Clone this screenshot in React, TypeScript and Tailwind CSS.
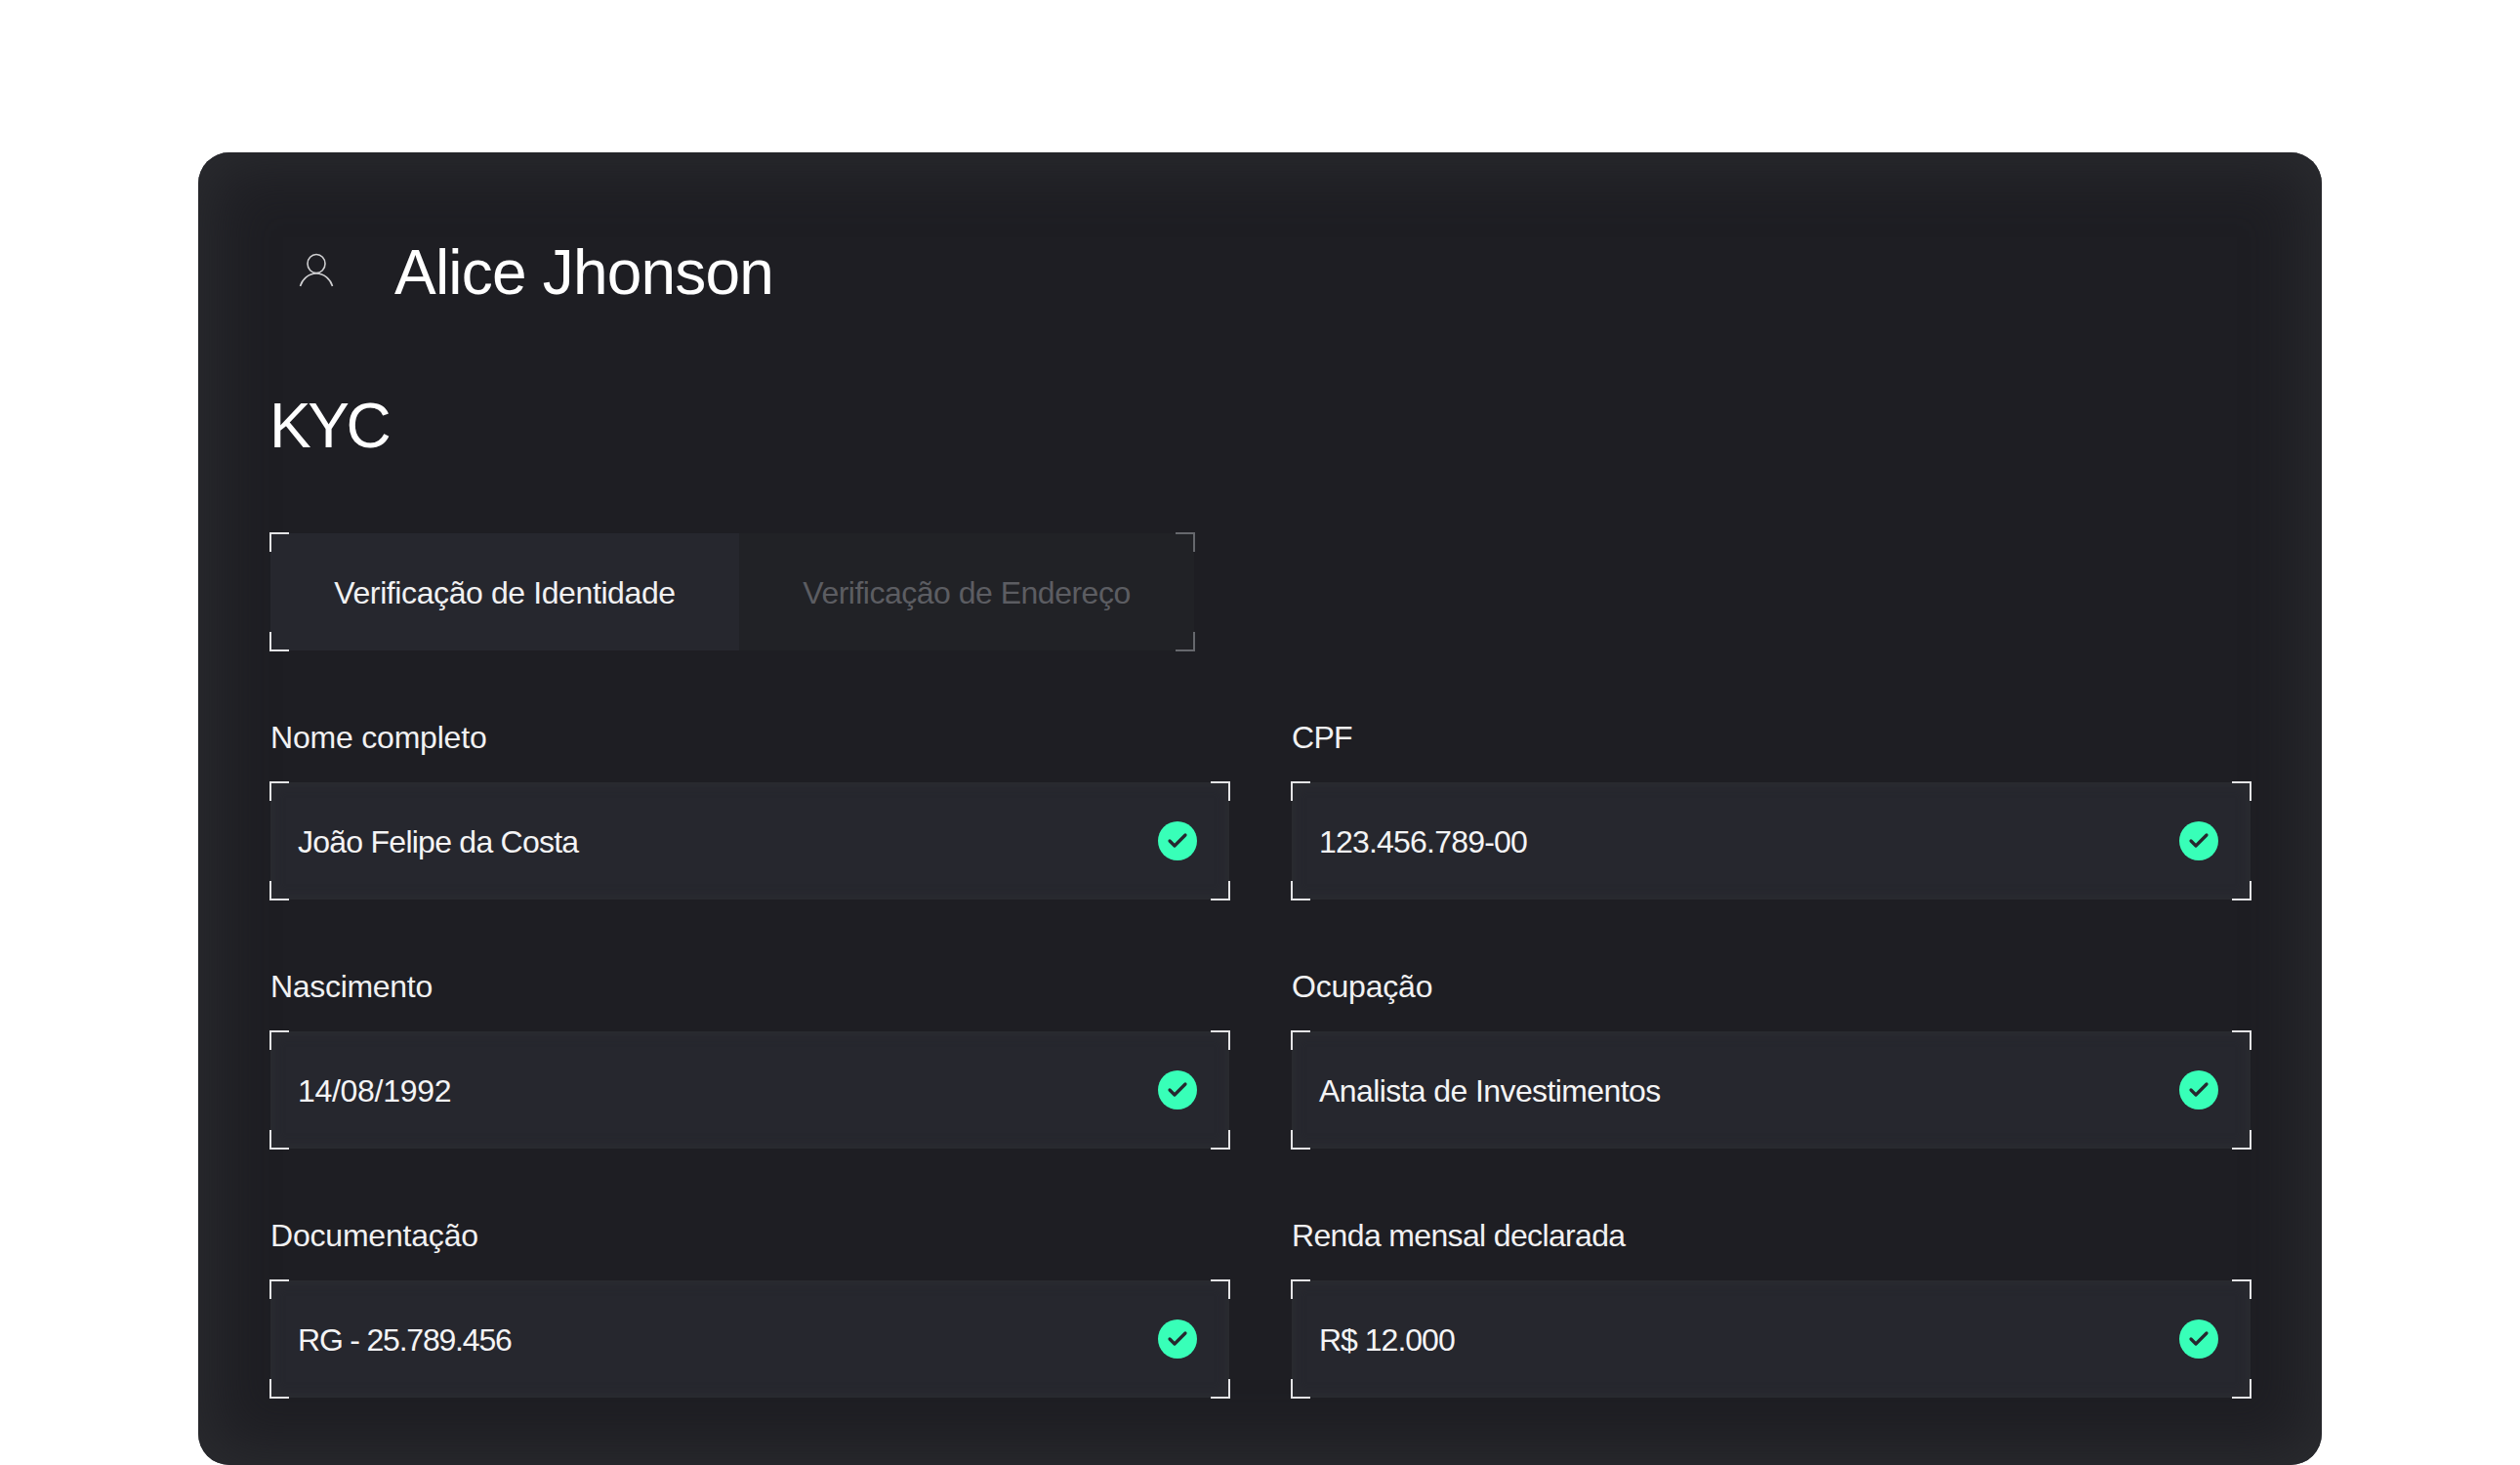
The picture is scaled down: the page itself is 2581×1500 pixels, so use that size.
import React from "react";
import { Check } from "lucide-react";

const fields = [
  { label: "Nome completo", value: "João Felipe da Costa", labelTrack: "tracking-[-0.2px]", track: "tracking-[-0.75px]" },
  { label: "CPF", value: "123.456.789-00", labelTrack: "tracking-[-0.7px]", track: "tracking-[-0.8px]" },
  { label: "Nascimento", value: "14/08/1992", labelTrack: "tracking-[-0.3px]", track: "tracking-[-0.3px]" },
  { label: "Ocupação", value: "Analista de Investimentos", labelTrack: "tracking-[-0.2px]", track: "tracking-[-0.6px]" },
  { label: "Documentação", value: "RG - 25.789.456", labelTrack: "tracking-[-0.2px]", track: "tracking-[-1.2px]" },
  { label: "Renda mensal declarada", value: "R$ 12.000", labelTrack: "tracking-[-0.65px]", track: "tracking-[-1px]" },
];

const Corners = () => (
  <>
    <span className="absolute -left-px -top-px h-5 w-5 border-l-2 border-t-2 border-[#e4e4e6]" />
    <span className="absolute -right-px -top-px h-5 w-5 border-r-2 border-t-2 border-[#e4e4e6]" />
    <span className="absolute -bottom-px -left-px h-5 w-5 border-b-2 border-l-2 border-[#e4e4e6]" />
    <span className="absolute -bottom-px -right-px h-5 w-5 border-b-2 border-r-2 border-[#e4e4e6]" />
  </>
);

const Field = ({ label, value, labelTrack, track }: { label: string; value: string; labelTrack: string; track: string }) => (
  <div className="flex flex-col">
    <label className={`mb-[26px] h-[40px] text-[32px] leading-[40px] text-[#f1f1f2] ${labelTrack}`}>{label}</label>
    <div className="relative flex h-[120px] items-center justify-between bg-[#26272e] pl-[28px] pr-[33px] shadow-[inset_0_0_14px_#2e2f33]">
      <span className={`pt-[2px] text-[32px] text-[#f4f4f5] ${track}`}>{value}</span>
      <span className="flex h-10 w-10 items-center justify-center rounded-full bg-[#38ffb8]">
        <Check size={24} strokeWidth={3.2} className="text-[#26272e]" />
      </span>
      <Corners />
    </div>
  </div>
);

export default function App() {
  return (
    <div className="h-[1500px] overflow-hidden bg-white pl-[203px] pr-[203px] pt-[156px] font-['Liberation_Sans',Arial,sans-serif]">
      <div className="h-[1344px] rounded-[32px] bg-[#1e1e23] pl-[74px] pr-[72px] shadow-[inset_0_0_60px_15px_#2a2b2f]">
        <div className="flex h-[162px] items-center pt-[84px]">
          <svg width="36" height="36" viewBox="0 0 36 36" fill="none" stroke="#cfcfd1" strokeWidth="1.6" className="ml-[29px] mt-[-5px] shrink-0">
            <ellipse cx="18" cy="11" rx="9" ry="9.5" />
            <path d="M1.5 34c2-7 8.500-13 16.500-13s14.500 6 16.500 13" />
          </svg>
          <h1 className="ml-[62px] text-[64px] font-normal leading-none tracking-[-0.8px] text-white">Alice Jhonson</h1>
        </div>
        <h2 className="ml-[-1px] mt-[78px] text-[64px] font-normal leading-[80px] tracking-[-3.5px] text-white">KYC</h2>
        <div className="relative mt-[70px] flex h-[120px] w-[946px] text-[32px]">
          <div className="flex w-[480px] items-center justify-center bg-[#26272e] pt-[2px] tracking-[-0.4px] text-[#f1f1f2]">Verificação de Identidade</div>
          <div className="flex flex-1 items-center justify-center bg-[#212226] pt-[2px] tracking-[-0.5px] text-[#5c5d62]">Verificação de Endereço</div>
          <span className="absolute -left-px -top-px h-5 w-5 border-l-2 border-t-2 border-[#e4e4e6]" />
          <span className="absolute -bottom-px -left-px h-5 w-5 border-b-2 border-l-2 border-[#e4e4e6]" />
          <span className="absolute -right-px -top-px h-5 w-5 border-r-2 border-t-2 border-[#66686d]" />
          <span className="absolute -bottom-px -right-px h-5 w-5 border-b-2 border-r-2 border-[#66686d]" />
        </div>
        <div className="mt-[69px] grid grid-cols-[982px_982px] gap-x-[64px] gap-y-[69px]">
          {fields.map((f) => (
            <Field key={f.label} label={f.label} value={f.value} labelTrack={f.labelTrack} track={f.track} />
          ))}
        </div>
      </div>
    </div>
  );
}
